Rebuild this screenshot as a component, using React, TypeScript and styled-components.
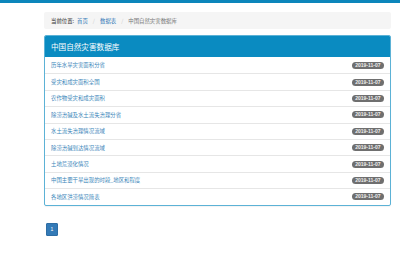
import React from 'react';
import styled, { createGlobalStyle } from 'styled-components';

const GlobalStyle = createGlobalStyle`
  body {
    margin: 0;
    background: #fff;
    font-family: "Microsoft YaHei", "Noto Sans CJK SC", "Liberation Sans", sans-serif;
  }
`;

const TopBar = styled.div`
  height: 3px;
  background: #0c86bb;
`;

const Container = styled.div`
  width: 347px;
  margin-left: 44px;
`;

const Breadcrumb = styled.div`
  margin-top: 9px;
  height: 17px;
  padding: 0 7px;
  display: flex;
  align-items: center;
  gap: 3px;
  background: #f5f5f5;
  border-radius: 2px;
  font-size: 5.4px;
  color: #777;
`;

const Label = styled.span`
  color: #333;
`;

const Crumb = styled.a<{ $active?: boolean }>`
  color: ${({ $active }) => ($active ? '#777' : '#337ab7')};
  text-decoration: none;
`;

const Sep = styled.span`
  color: #ccc;
  padding: 0 2px;
`;

const Panel = styled.div`
  margin-top: 6px;
  border: 1px solid #5cb2d6;
  border-radius: 2px;
  overflow: hidden;
  box-shadow: 0 1px 1px rgba(0, 0, 0, 0.05);
`;

const Heading = styled.div`
  height: 21px;
  display: flex;
  align-items: center;
  padding: 0 6px;
  background: #0a8bc1;
  color: #fff;
  font-size: 7.6px;
`;

const Row = styled.div`
  height: 16.4px;
  display: flex;
  align-items: center;
  justify-content: space-between;
  padding: 0 6px;
  border-top: 1px solid #e6e6e6;
  box-sizing: border-box;
  &:first-child {
    border-top: none;
  }
`;

const ItemLink = styled.a`
  color: #3a86b9;
  font-size: 5.4px;
  text-decoration: none;
`;

const Badge = styled.span`
  background: #6f6f6f;
  color: #eee;
  font-family: "Liberation Sans", sans-serif;
  font-weight: bold;
  font-size: 5px;
  line-height: 7px;
  padding: 0 3.5px;
  border-radius: 4px;
`;

const Pagination = styled.div`
  margin-top: 17px;
  margin-left: 2px;
  display: flex;
`;

const PageButton = styled.span`
  width: 12px;
  height: 13px;
  display: flex;
  align-items: center;
  justify-content: center;
  background: #337ab7;
  border: 1px solid #2e6da4;
  border-radius: 1px;
  box-sizing: border-box;
  color: #fff;
  font-family: "Liberation Sans", sans-serif;
  font-size: 5px;
`;

const items = [
  '历年水旱灾害面积分省',
  '受灾和成灾面积全国',
  '农作物受灾和成灾面积',
  '除涝治碱及水土流失治理分省',
  '水土流失治理情况流域',
  '除涝治碱到达情况流域',
  '土地荒漠化情况',
  '中国主要干旱出现的时段_地区和程度',
  '各地区洪涝情况简表',
];

export default function App() {
  return (
    <>
      <GlobalStyle />
      <TopBar />
      <Container>
        <Breadcrumb>
          <Label>当前位置:</Label>
          <Crumb href="#">首页</Crumb>
          <Sep>/</Sep>
          <Crumb href="#">数据表</Crumb>
          <Sep>/</Sep>
          <Crumb $active>中国自然灾害数据库</Crumb>
        </Breadcrumb>
        <Panel>
          <Heading>中国自然灾害数据库</Heading>
          <div>
            {items.map((name) => (
              <Row key={name}>
                <ItemLink href="#">{name}</ItemLink>
                <Badge>2019-11-07</Badge>
              </Row>
            ))}
          </div>
        </Panel>
        <Pagination>
          <PageButton>1</PageButton>
        </Pagination>
      </Container>
    </>
  );
}
